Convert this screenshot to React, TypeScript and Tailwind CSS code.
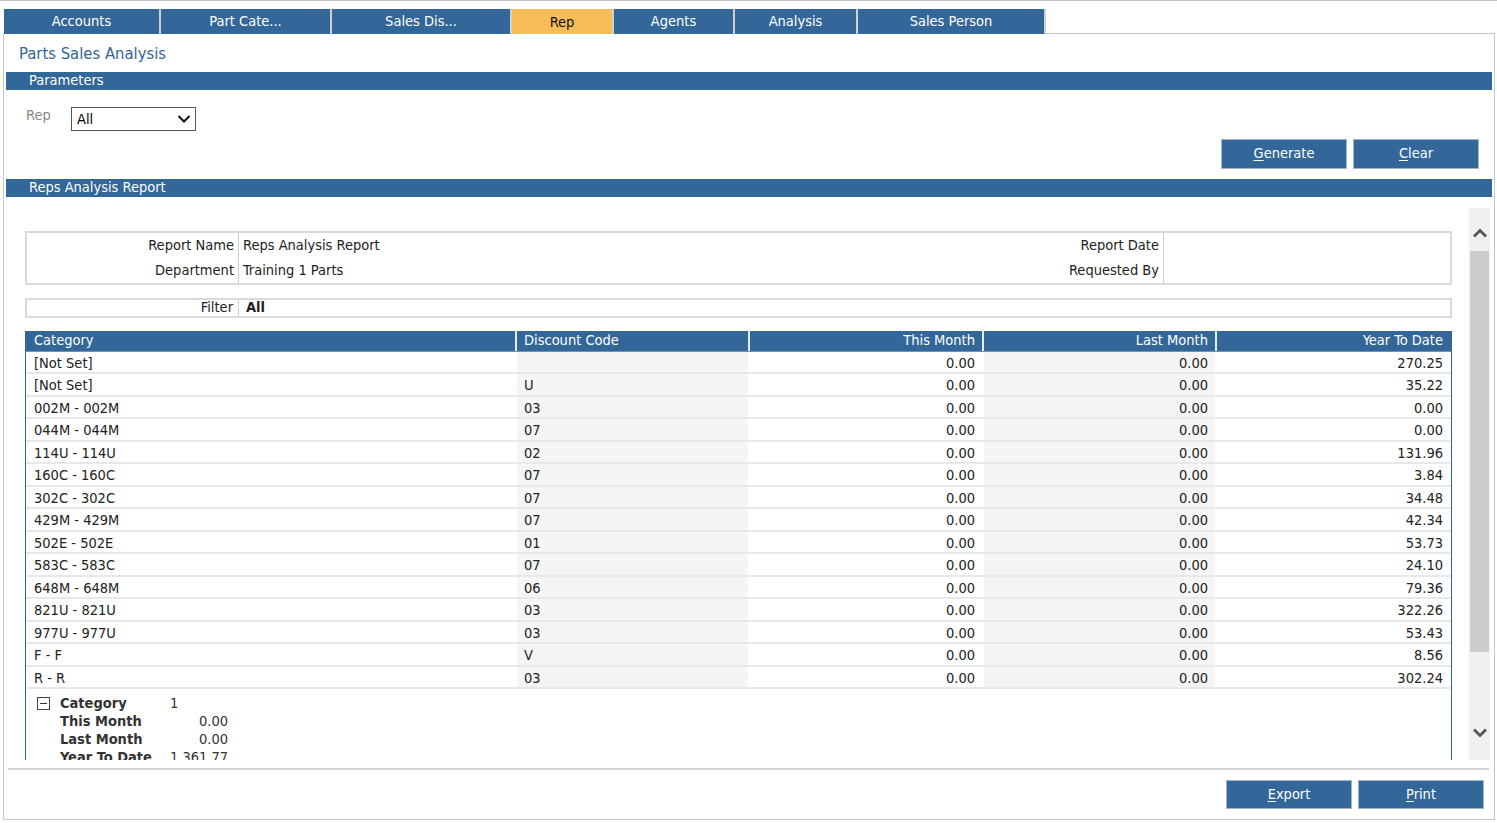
import { ReactNode } from "react";

const FONT = { fontFamily: 'Tahoma, "DejaVu Sans Condensed", "Liberation Sans", sans-serif' };

const TABS = [
  { label: "Accounts", w: "w-[157px]", active: false },
  { label: "Part Cate...", w: "w-[171px]", active: false },
  { label: "Sales Dis...", w: "w-[180px]", active: false },
  { label: "Rep", w: "w-[102px]", active: true },
  { label: "Agents", w: "w-[121px]", active: false },
  { label: "Analysis", w: "w-[123px]", active: false },
  { label: "Sales Person", w: "w-[188px]", active: false },
];

const ROWS = [
  ["[Not Set]", "", "0.00", "0.00", "270.25"],
  ["[Not Set]", "U", "0.00", "0.00", "35.22"],
  ["002M - 002M", "03", "0.00", "0.00", "0.00"],
  ["044M - 044M", "07", "0.00", "0.00", "0.00"],
  ["114U - 114U", "02", "0.00", "0.00", "131.96"],
  ["160C - 160C", "07", "0.00", "0.00", "3.84"],
  ["302C - 302C", "07", "0.00", "0.00", "34.48"],
  ["429M - 429M", "07", "0.00", "0.00", "42.34"],
  ["502E - 502E", "01", "0.00", "0.00", "53.73"],
  ["583C - 583C", "07", "0.00", "0.00", "24.10"],
  ["648M - 648M", "06", "0.00", "0.00", "79.36"],
  ["821U - 821U", "03", "0.00", "0.00", "322.26"],
  ["977U - 977U", "03", "0.00", "0.00", "53.43"],
  ["F - F", "V", "0.00", "0.00", "8.56"],
  ["R - R", "03", "0.00", "0.00", "302.24"],
];

const COLS = "grid grid-cols-[491px_233px_234px_233px_233px]";

function Button({ first, rest }: { first: string; rest: string }) {
  return (
    <button className="h-full w-[126px] bg-[#336699] border border-[#9fb6cf] text-white text-[14.5px]">
      <span className="underline underline-offset-2">{first}</span>
      {rest}
    </button>
  );
}

function Bar({ children }: { children: ReactNode }) {
  return (
    <div className="mx-[2px] h-[18px] bg-[#336699] text-white text-[14.5px] leading-[17px] pl-[23px]">
      {children}
    </div>
  );
}

function Chevron({ up }: { up?: boolean }) {
  return (
    <svg width="16" height="10" viewBox="0 0 16 10">
      <polyline
        points={up ? "2,8.5 8,2.5 14,8.5" : "2,1.5 8,7.5 14,1.5"}
        fill="none"
        stroke="#555"
        strokeWidth="2.8"
      />
    </svg>
  );
}

export default function App() {
  return (
    <div className="w-[1497px] h-[823px] bg-white text-[#222] border-t border-[#c4c4c4] overflow-hidden" style={FONT}>
      <div className="pl-[3px] pr-[2px] pt-[8px]">
        {/* tabs */}
        <div className="flex h-[25px]">
          <div className="w-px border-b border-[#c6c6c6]" />
          {TABS.map((t) => (
            <div
              key={t.label}
              className={`${t.w} h-full border-r-2 border-[#d0d0d0] flex items-center justify-center text-[14.5px] ${
                t.active ? "bg-[#f6bc55] text-[#111]" : "bg-[#336699] text-white"
              }`}
            >
              <span className={t.active ? "pt-[3px]" : "pt-[1px]"}>{t.label}</span>
            </div>
          ))}
          <div className="flex-1 border-b border-[#c6c6c6]" />
        </div>

        {/* frame */}
        <div className="h-[786px] border border-t-0 border-[#c6c6c6] flex flex-col">
          <div className="h-[38px] pl-[15px] pt-[10px] text-[16.5px] leading-[20px] text-[#336699]">Parts Sales Analysis</div>
          <Bar>Parameters</Bar>

          <div className="flex items-start pl-[22px] pt-[17px] h-[40px]">
            <span className="text-[14.5px] text-[#888] mt-[-2px] w-[45px]">Rep</span>
            <div className="w-[125px] h-[24px] border border-[#555] flex items-center justify-between pl-[5px] pr-[4px] text-[14.5px] text-black">
              <span className="pt-[2px]">All</span>
              <svg width="14" height="10" viewBox="0 0 14 10">
                <polyline points="1.5,2 7,7.5 12.5,2" fill="none" stroke="#111" strokeWidth="2" />
              </svg>
            </div>
          </div>

          <div className="flex justify-end gap-[6px] pr-[15px] mt-[9px] h-[30px]">
            <Button first="G" rest="enerate" />
            <Button first="C" rest="lear" />
          </div>

          <div className="mt-[10px]">
            <Bar>Reps Analysis Report</Bar>
          </div>

          {/* scroll viewport */}
          <div className="mt-[11px] h-[552px] flex overflow-hidden">
            <div className="flex-1 pl-[21px] pr-[17px] pt-[23px] text-[14.5px]">
              {/* report info */}
              <div className="h-[54px] border-2 border-[#dadada] grid grid-cols-[212px_1fr_auto_286px]">
                <div className="text-right pr-[4px] border-r border-[#cfcfcf] leading-[25px]">
                  <div>Report Name</div>
                  <div>Department</div>
                </div>
                <div className="pl-[4px] leading-[25px]">
                  <div>Reps Analysis Report</div>
                  <div>Training 1 Parts</div>
                </div>
                <div className="text-right pr-[4px] border-r border-[#cfcfcf] leading-[25px]">
                  <div>Report Date</div>
                  <div>Requested By</div>
                </div>
                <div />
              </div>

              {/* filter */}
              <div className="mt-[13px] h-[20px] border-2 border-[#dadada] grid grid-cols-[212px_1fr] leading-[15px]">
                <div className="text-right pr-[5px] border-r border-[#cfcfcf]">Filter</div>
                <div className="pl-[7px] font-bold">All</div>
              </div>

              {/* data grid */}
              <div className="mt-[13px] border-x border-[#336699] h-[500px]">
                <div className={`${COLS} h-[21px] bg-[#336699] text-white leading-[19px] border-b border-[#6f93ba]`}>
                  <div className="pl-[8px] border-r-2 border-[#e4ebf2]">Category</div>
                  <div className="pl-[7px] border-r-2 border-[#e4ebf2]">Discount Code</div>
                  <div className="text-right pr-[7px] border-r-2 border-[#e4ebf2]">This Month</div>
                  <div className="text-right pr-[7px] border-r-2 border-[#e4ebf2]">Last Month</div>
                  <div className="text-right pr-[7px]">Year To Date</div>
                </div>
                {ROWS.map((r, i) => (
                  <div key={i} className={`${COLS} h-[22.47px] border-b-2 border-[#e8e8e8] leading-[21px] overflow-hidden`}>
                    <div className="pl-[8px] pt-px border-r-2 border-white">{r[0]}</div>
                    <div className="pl-[7px] pt-px bg-[#f5f5f5] border-r-2 border-white">{r[1]}</div>
                    <div className="text-right pr-[7px] pt-px border-r-2 border-white">{r[2]}</div>
                    <div className="text-right pr-[7px] pt-px bg-[#f5f5f5] border-r-2 border-white">{r[3]}</div>
                    <div className="text-right pr-[7px] pt-px">{r[4]}</div>
                  </div>
                ))}

                {/* group summary */}
                <div className="flex pl-[11px] pt-[5px] leading-[18px]">
                  <div className="w-[13px] h-[13px] mt-[3px] border border-[#444] flex items-center justify-center">
                    <div className="w-[7px] h-[1.5px] bg-[#333]" />
                  </div>
                  <div className="pl-[10px] font-bold text-[#333] w-[120px]">
                    <div>Category</div>
                    <div>This Month</div>
                    <div>Last Month</div>
                    <div>Year To Date</div>
                  </div>
                  <div className="w-[58px] text-[#333]">
                    <div className="text-left">1</div>
                    <div className="text-right">0.00</div>
                    <div className="text-right">0.00</div>
                    <div className="text-right">1,361.77</div>
                  </div>
                </div>
              </div>
            </div>

            {/* scrollbar */}
            <div className="w-[21px] bg-[#f0f0f0] flex flex-col items-center mr-[4px]">
              <div className="h-[43px] flex items-center justify-center pt-[6px]">
                <Chevron up />
              </div>
              <div className="w-[19px] h-[401px] bg-[#cdcdcd]" />
              <div className="flex-1 flex items-end justify-center pb-[22px]">
                <Chevron />
              </div>
            </div>
          </div>

          <div className="mt-[8px] ml-[4px] mr-[5px] h-[2px] bg-[#d2d2d2]" />

          <div className="flex justify-end gap-[6px] pr-[10px] mt-[10px] h-[29px]">
            <Button first="E" rest="xport" />
            <Button first="P" rest="rint" />
          </div>
        </div>
      </div>
    </div>
  );
}
